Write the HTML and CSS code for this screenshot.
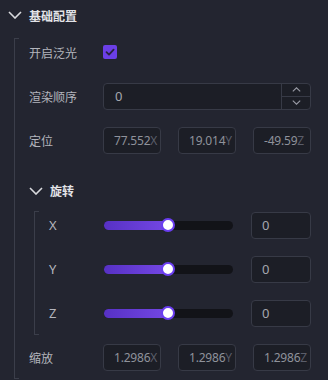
FILE: index.html
```html
<!DOCTYPE html>
<html lang="zh">
<head>
<meta charset="utf-8">
<link rel="stylesheet" href="styles.css">
</head>
<body>
<div class="panel">
  <div class="group-head">
    <svg class="chev" width="14" height="8" viewBox="0 0 14 8"><polyline points="1,1 7,7 13,1" fill="none" stroke="#d9dade" stroke-width="1.6"/></svg>
    <span class="head-title">基础配置</span>
  </div>
  <div class="group-body">
    <div class="bracket"></div>
    <div class="rows">
      <div class="row">
        <span class="label">开启泛光</span>
        <span class="checkbox">
          <svg width="14" height="14" viewBox="0 0 14 14"><polyline points="3.5,7.2 6,9.6 10.6,4.6" fill="none" stroke="#2a2340" stroke-width="1.8" stroke-linecap="round" stroke-linejoin="round"/></svg>
        </span>
      </div>
      <div class="row">
        <span class="label">渲染顺序</span>
        <div class="spin">
          <span class="spin-value">0</span>
          <div class="spin-btns">
            <span class="spin-btn"><svg width="9" height="5" viewBox="0 0 9 5"><polyline points="0.8,4.3 4.5,0.8 8.2,4.3" fill="none" stroke="#9a9ca6" stroke-width="1.1"/></svg></span>
            <span class="spin-btn"><svg width="9" height="5" viewBox="0 0 9 5"><polyline points="0.8,0.7 4.5,4.2 8.2,0.7" fill="none" stroke="#9a9ca6" stroke-width="1.1"/></svg></span>
          </div>
        </div>
      </div>
      <div class="row">
        <span class="label">定位</span>
        <div class="triple">
          <div class="vbox"><span class="vval">77.552</span><span class="vsuf">X</span></div>
          <div class="vbox"><span class="vval">19.014</span><span class="vsuf">Y</span></div>
          <div class="vbox"><span class="vval">-49.59</span><span class="vsuf">Z</span></div>
        </div>
      </div>

      <div class="sub-head">
        <svg class="chev" width="14" height="8" viewBox="0 0 14 8"><polyline points="1,1 7,7 13,1" fill="none" stroke="#d9dade" stroke-width="1.6"/></svg>
        <span class="sub-title">旋转</span>
      </div>
      <div class="sub-body">
        <div class="bracket"></div>
        <div class="rows">
          <div class="row">
            <span class="label sub-label">X</span>
            <div class="slider"><div class="fill" style="width:64px"></div><div class="thumb" style="left:64px"></div></div>
            <div class="numbox">0</div>
          </div>
          <div class="row">
            <span class="label sub-label">Y</span>
            <div class="slider"><div class="fill" style="width:64px"></div><div class="thumb" style="left:64px"></div></div>
            <div class="numbox">0</div>
          </div>
          <div class="row">
            <span class="label sub-label">Z</span>
            <div class="slider"><div class="fill" style="width:64px"></div><div class="thumb" style="left:64px"></div></div>
            <div class="numbox">0</div>
          </div>
        </div>
      </div>

      <div class="row">
        <span class="label">缩放</span>
        <div class="triple">
          <div class="vbox"><span class="vval">1.2986</span><span class="vsuf">X</span></div>
          <div class="vbox"><span class="vval">1.2986</span><span class="vsuf">Y</span></div>
          <div class="vbox"><span class="vval">1.2986</span><span class="vsuf">Z</span></div>
        </div>
      </div>
    </div>
  </div>
</div>
</body>
</html>
```
FILE: styles.css
```css
html, body {
  margin: 0;
  padding: 0;
  background: #232530;
}
body {
  font-family: "Noto Sans", "Noto Sans CJK SC", sans-serif;
  font-size: 12px;
  color: #b3b5bd;
  width: 328px;
  height: 380px;
  overflow: hidden;
}
.panel {
  display: flex;
  flex-direction: column;
}
.group-head {
  display: flex;
  align-items: center;
  height: 30px;
  padding-left: 8px;
  gap: 7px;
}
.chev {
  flex: none;
  display: block;
}
.head-title,
.sub-title {
  font-family: "Noto Sans CJK SC", sans-serif;
  font-size: 12px;
  font-weight: 700;
  color: #e2e3e7;
}
.group-body {
  display: flex;
  padding: 0 17px 0 14px;
}
.bracket {
  flex: none;
  width: 4px;
  margin-top: 8px;
  border: 1px solid #3b3e4a;
  border-right: none;
}
.rows {
  flex: 1;
  margin-left: 10px;
  display: flex;
  flex-direction: column;
}
.row {
  display: flex;
  align-items: center;
  height: 44px;
}
.label {
  flex: none;
  width: 74px;
  font-family: "Noto Sans CJK SC", sans-serif;
  color: #b3b5bd;
}
.sub-label {
  width: 55px;
  font-family: "Noto Sans", sans-serif;
  font-size: 13px;
}
.checkbox {
  width: 14px;
  height: 14px;
  border-radius: 2px;
  background: #6b3fe6;
  display: flex;
}
.spin {
  flex: 1;
  height: 27px;
  box-sizing: border-box;
  border: 1px solid #373a46;
  border-radius: 4px;
  background: #1c1e26;
  display: flex;
}
.spin-value {
  flex: 1;
  padding-left: 11px;
  line-height: 25px;
  color: #a4a6ae;
  font-size: 13px;
}
.spin-btns {
  width: 28px;
  border-left: 1px solid #373a46;
  display: flex;
  flex-direction: column;
}
.spin-btn {
  flex: 1;
  display: flex;
  align-items: center;
  justify-content: center;
}
.spin-btn + .spin-btn {
  border-top: 1px solid #373a46;
}
.triple {
  flex: 1;
  display: flex;
  justify-content: space-between;
}
.vbox {
  width: 58px;
  height: 27px;
  box-sizing: border-box;
  border: 1px solid #373a46;
  border-radius: 4px;
  background: #1c1e26;
  display: flex;
  align-items: center;
  padding-left: 10px;
}
.vval {
  flex: none;
  white-space: nowrap;
  color: #8f929b;
  font-size: 12px;
  letter-spacing: -0.2px;
}
.vsuf {
  flex: none;
  color: #5a5d69;
  font-size: 12px;
}
.sub-head {
  display: flex;
  align-items: center;
  gap: 7px;
  margin-top: 16px;
  height: 25px;
}
.sub-body {
  display: flex;
  padding-left: 5px;
}
.slider {
  position: relative;
  width: 129px;
  height: 9px;
  border-radius: 5px;
  background: #121318;
  flex: none;
}
.fill {
  height: 100%;
  border-radius: 5px 0 0 5px;
  background: linear-gradient(90deg, #5731c4, #7447e4);
}
.thumb {
  position: absolute;
  top: 50%;
  width: 10px;
  height: 10px;
  margin: -7px 0 0 -7px;
  border-radius: 50%;
  background: #ffffff;
  border: 2px solid #6a3df0;
}
.numbox {
  margin-left: 18px;
  width: 60px;
  height: 27px;
  box-sizing: border-box;
  border: 1px solid #373a46;
  border-radius: 4px;
  background: #1c1e26;
  padding-left: 10px;
  line-height: 25px;
  color: #a4a6ae;
  font-size: 13px;
}
```
